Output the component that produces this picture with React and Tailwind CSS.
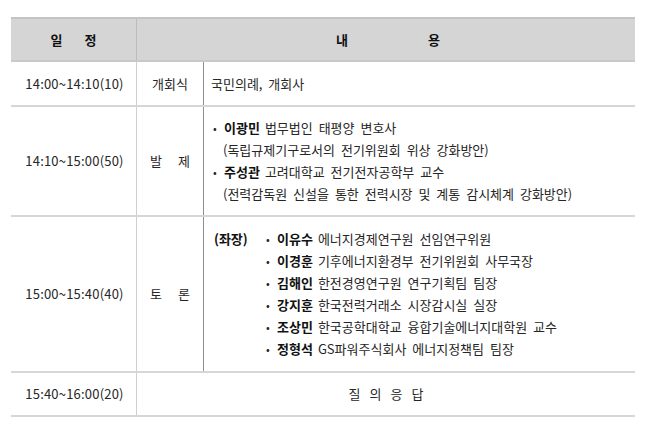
import React from "react";

const font = { fontFamily: '"Noto Sans CJK KR", "Noto Sans", sans-serif' };

const panel = [
  ["이유수", "에너지경제연구원 선임연구위원"],
  ["이경훈", "기후에너지환경부 전기위원회 사무국장"],
  ["김해인", "한전경영연구원 연구기획팀 팀장"],
  ["강지훈", "한국전력거래소 시장감시실 실장"],
  ["조상민", "한국공학대학교 융합기술에너지대학원 교수"],
  ["정형석", "GS파워주식회사 에너지정책팀 팀장"],
];

function Bullet({ name, desc }) {
  return (
    <div className="flex items-center h-[22px]">
      <span className="w-[11px] text-[11px]">•</span>
      <span className="font-bold text-[#111]">{name}</span>
      <span className="ml-[5px]">{desc}</span>
    </div>
  );
}

export default function App() {
  return (
    <div
      className="w-[658px] h-[441px] bg-white pt-[17px] pl-[11px] text-[13px] text-[#262626]"
      style={font}
    >
      <div className="w-[624px]">
        <div className="flex h-[45px] bg-[#d5d5d5] border-t-2 border-[#c4c4c4] border-b-2 border-b-[#c9c9c9] font-bold text-[#111] text-[13px]">
          <div className="w-[126px] flex items-center justify-center gap-[22px] border-r border-[#bdbdbd]">
            <span>일</span>
            <span>정</span>
          </div>
          <div className="flex-1 flex items-center justify-center gap-[80px] pl-[4px]">
            <span>내</span>
            <span>용</span>
          </div>
        </div>

        <div className="flex h-[45px] border-b-2 border-[#d6d6d6]">
          <div className="w-[126px] flex items-center justify-center border-r border-[#cfcfcf] tracking-[0.2px] pl-[2px]">
            14:00~14:10(10)
          </div>
          <div className="w-[67px] flex items-center justify-center border-r border-[#8f8f8f]">
            개회식
          </div>
          <div className="flex-1 flex items-center pl-[7px] [word-spacing:3px]">국민의례, 개회사</div>
        </div>

        <div className="flex h-[110px] border-b-2 border-[#d6d6d6]">
          <div className="w-[126px] flex items-center justify-center border-r border-[#cfcfcf] tracking-[0.2px] pl-[2px]">
            14:10~15:00(50)
          </div>
          <div className="w-[67px] flex items-center justify-center gap-[16px] border-r border-[#8f8f8f]">
            <span>발</span>
            <span>제</span>
          </div>
          <div className="flex-1 flex flex-col justify-center pl-[9px] [word-spacing:3px]">
            <Bullet name="이광민" desc="법무법인 태평양 변호사" />
            <div className="h-[22px] flex items-center pl-[10px]">
              (독립규제기구로서의 전기위원회 위상 강화방안)
            </div>
            <Bullet name="주성관" desc="고려대학교 전기전자공학부 교수" />
            <div className="h-[22px] flex items-center pl-[10px]">
              (전력감독원 신설을 통한 전력시장 및 계통 감시체계 강화방안)
            </div>
          </div>
        </div>

        <div className="flex h-[156px] border-b-2 border-[#d6d6d6]">
          <div className="w-[126px] flex items-center justify-center border-r border-[#cfcfcf] tracking-[0.2px] pl-[2px]">
            15:00~15:40(40)
          </div>
          <div className="w-[67px] flex items-center justify-center gap-[16px] border-r border-[#8f8f8f]">
            <span>토</span>
            <span>론</span>
          </div>
          <div className="flex-1 flex items-center pl-[10px] [word-spacing:3px]">
            <div className="flex">
              <div className="w-[52px] h-[22px] flex items-center font-bold text-[#111]">(좌장)</div>
              <div className="flex flex-col">
                {panel.map(([n, d]) => (
                  <Bullet key={n} name={n} desc={d} />
                ))}
              </div>
            </div>
          </div>
        </div>

        <div className="flex h-[44px] border-b-2 border-[#d6d6d6]">
          <div className="w-[126px] flex items-center justify-center border-r border-[#cfcfcf] tracking-[0.2px] pl-[2px]">
            15:40~16:00(20)
          </div>
          <div className="flex-1 flex items-center justify-center gap-[9px]">
            <span>질</span>
            <span>의</span>
            <span>응</span>
            <span>답</span>
          </div>
        </div>
      </div>
    </div>
  );
}
